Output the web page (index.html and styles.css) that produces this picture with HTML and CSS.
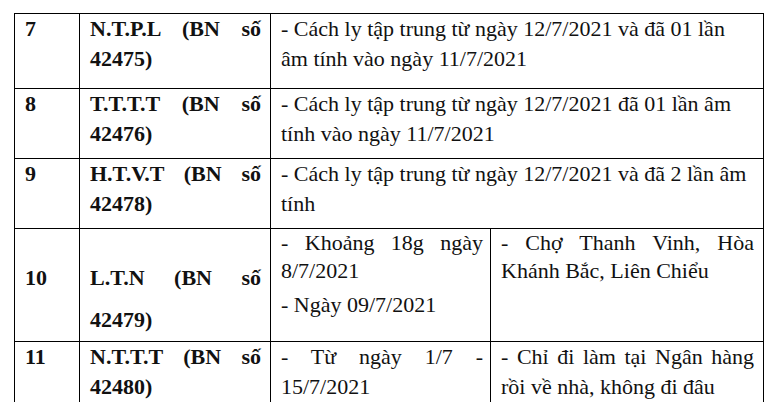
FILE: index.html
```html
<!DOCTYPE html>
<html lang="vi">
<head>
<meta charset="utf-8">
<link rel="stylesheet" href="styles.css">
</head>
<body>
<table class="grid">
  <colgroup>
    <col class="c-no">
    <col class="c-name">
    <col class="c-time">
    <col class="c-place">
  </colgroup>
  <tr class="r1">
    <td class="no">7</td>
    <td class="name">N.T.P.L (BN số 42475)</td>
    <td class="desc" colspan="2">- Cách ly tập trung từ ngày 12/7/2021 và đã 01 lần âm tính vào ngày 11/7/2021</td>
  </tr>
  <tr class="r2">
    <td class="no">8</td>
    <td class="name">T.T.T.T (BN số 42476)</td>
    <td class="desc" colspan="2">- Cách ly tập trung từ ngày 12/7/2021 đã 01 lần âm tính vào ngày 11/7/2021</td>
  </tr>
  <tr class="r3">
    <td class="no">9</td>
    <td class="name">H.T.V.T (BN số 42478)</td>
    <td class="desc" colspan="2">- Cách ly tập trung từ ngày 12/7/2021 và đã 2 lần âm tính</td>
  </tr>
  <tr class="r4">
    <td class="no no-mid">10</td>
    <td class="name name-mid">L.T.N (BN số 42479)</td>
    <td class="time">
      <p class="para">- Khoảng 18g ngày 8/7/2021</p>
      <p class="para para-gap">- Ngày 09/7/2021</p>
    </td>
    <td class="place">- Chợ Thanh Vinh, Hòa Khánh Bắc, Liên Chiểu</td>
  </tr>
  <tr class="r5">
    <td class="no">11</td>
    <td class="name">N.T.T.T (BN số 42480)</td>
    <td class="time time-wide">- Từ ngày 1/7 - 15/7/2021</td>
    <td class="place place-wide">- Chỉ đi làm tại Ngân hàng rồi về nhà, không đi đâu</td>
  </tr>
</table>
</body>
</html>
```

FILE: styles.css
```css
html, body {
  margin: 0;
  padding: 0;
  background: #ffffff;
}
body {
  padding: 13px 0 0 14px;
  font-family: "Liberation Serif", "Times New Roman", serif;
  font-size: 22px;
  color: #111111;
  overflow: hidden;
}
.grid {
  border-collapse: collapse;
  table-layout: fixed;
  width: 749px;
}
.c-no { width: 65px; }
.c-name { width: 191px; }
.c-time { width: 220px; }
.c-place { width: 273px; }
.grid td {
  border: 1px solid #000000;
  vertical-align: top;
  padding: 0 9px 0 10px;
  line-height: 30px;
}
.r1 { height: 75px; }
.r2 { height: 70px; }
.r3 { height: 70px; }
.r4 { height: 107px; }
.r5 { height: 90px; }
.grid .no,
.grid .name {
  font-weight: bold;
}
.grid .name {
  text-align: justify;
}
.grid .desc {
  text-align: left;
  padding-right: 12px;
}
.grid .no-mid {
  padding-top: 34px;
}
.grid .name-mid {
  padding-top: 28px;
  line-height: 42px;
}
.grid .time,
.grid .place {
  text-align: justify;
  line-height: 28px;
}
.grid .time {
  padding-right: 7px;
}
.grid .time-wide,
.grid .place-wide {
  line-height: 30px;
}
.grid .r4-cell {
  padding-top: 1px;
}
.para {
  margin: 0;
}
.para-gap {
  margin-top: 6px;
}
```
